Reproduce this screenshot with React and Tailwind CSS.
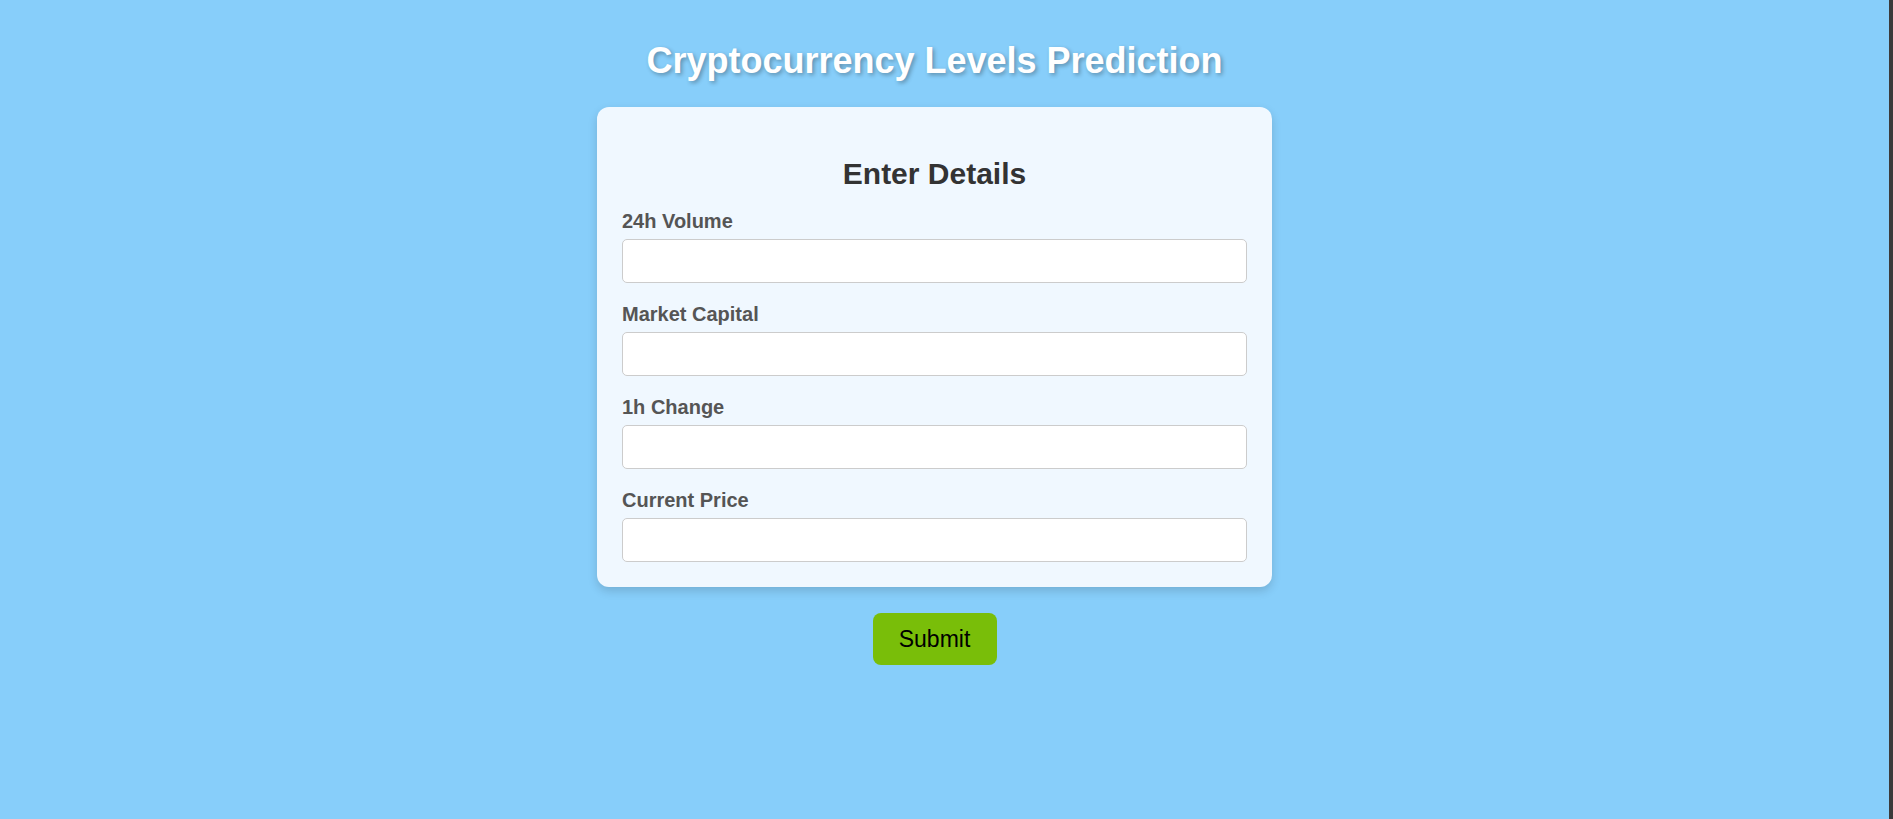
const fields = ["24h Volume", "Market Capital", "1h Change", "Current Price"];

const App = () => {
	return (
		<div className="flex min-h-screen w-full font-['Liberation_Sans',Arial,sans-serif]">
			<div className="flex-1 bg-[#87cefa] pr-[20px] pt-[41px]">
				<div className="flex flex-col items-center">
					{/* Title */}
					<h1 className="text-[36px] leading-[40px] font-bold text-white [text-shadow:2px_2px_4px_rgba(0,0,0,0.3)]">
						Cryptocurrency Levels Prediction
					</h1>

					{/* Form Card */}
					<div className="mt-[26px] w-[675px] rounded-[12px] bg-[#f0f8ff] px-[25px] pt-[50px] pb-[25px] shadow-[0_4px_10px_rgba(0,0,0,0.15)]">
						<h2 className="text-center text-[30px] leading-[34px] font-bold text-[#333]">
							Enter Details
						</h2>
						<div className="mt-[19px] flex flex-col gap-[20px]">
							{fields.map((label) => (
								<div key={label} className="flex flex-col">
									<label className="mb-[7px] text-[20px] leading-[22px] font-bold text-[#555]">
										{label}
									</label>
									<input
										type="text"
										className="h-[44px] w-full rounded-[5px] border border-[#ccc] bg-white px-[10px] text-[16px] outline-none"
									/>
								</div>
							))}
						</div>
					</div>

					{/* Submit */}
					<button className="mt-[26px] flex h-[52px] w-[124px] items-center justify-center rounded-[8px] bg-[#79be09] text-[23px] text-black">
						Submit
					</button>
				</div>
			</div>
			<div className="w-[4px] bg-[#3a3a3a]" />
		</div>
	);
};

export default App;
